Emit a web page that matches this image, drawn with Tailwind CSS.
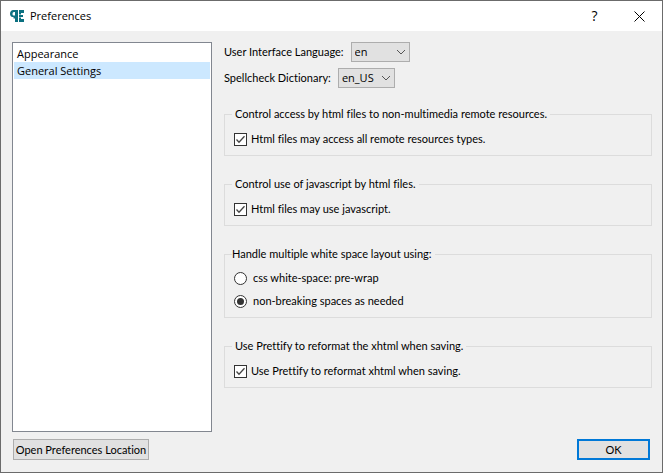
<!DOCTYPE html>
<html lang="en">
<head>
<meta charset="utf-8">
<title>Preferences</title>
<script src="https://cdn.jsdelivr.net/npm/@tailwindcss/browser@4"></script>
</head>
<body class="flex min-h-screen flex-col border border-[#6b6b6b] bg-[#f0f0f0] font-['Lato','Noto_Sans',sans-serif] text-[11px] leading-4 text-black [font-variant-ligatures:none]">
<header class="flex h-[30px] items-center bg-white pl-[9px] font-['Open_Sans',sans-serif]">
  <svg class="mr-1.5 h-3.5 w-3.5" viewBox="0 0 14 14" fill="#0b7080" aria-hidden="true"><path fill-rule="evenodd" d="M8 1v12H5V9.500H3.500V8H2.500C1 8 0 6.500 0 4.800S1 1 3.500 1zM5 3H4C3 3 2.500 3.800 2.500 5S3 6.500 4 6.500h1z"/><path d="M9 1h5v3h-3v1.500H9zM9 6h4v2H9zM9 8.500h2V10h3v3H9z"/></svg>
  <h1 class="flex-1">Preferences</h1>
  <button type="button" aria-label="Help" class="h-full w-[45px] text-sm">?</button>
  <button type="button" aria-label="Close" class="flex h-full w-[45px] items-center justify-center"><svg class="h-[11px] w-[11px]" viewBox="0 0 11 11" fill="none" stroke="#000"><path d="M.5.5l10 10M10.500.5l-10 10"/></svg></button>
</header>
<main class="flex flex-1 gap-3 pt-[11px] pr-2.5 pl-[11px]">
  <nav class="w-[200px] shrink-0 border border-[#828790] bg-white p-px pt-0.5 font-['Open_Sans',sans-serif] leading-[17px]">
    <a href="#appearance" class="block px-[3px]">Appearance</a>
    <a href="#general" aria-current="page" class="block bg-[#cce8ff] px-[3px]">General Settings</a>
  </nav>
  <form class="flex min-w-0 flex-1 flex-col">
    <div class="flex h-5 items-center gap-[7px]">
      <label for="lang">User Interface Language:</label>
      <span class="grid items-center">
        <select id="lang" class="col-start-1 row-start-1 h-5 w-[59px] appearance-none border border-[#adadad] bg-[#e1e1e1] pl-[3px] font-['Open_Sans',sans-serif] leading-4"><option>en</option></select>
        <svg class="pointer-events-none col-start-1 row-start-1 mr-1 h-2 w-2.5 justify-self-end" viewBox="0 0 10 8" fill="none" stroke="#555"><path d="M1 2l4 4 4-4"/></svg>
      </span>
    </div>
    <div class="mt-1.5 flex h-5 items-center gap-[7px]">
      <label for="dict">Spellcheck Dictionary:</label>
      <span class="grid items-center">
        <select id="dict" class="col-start-1 row-start-1 h-5 w-[57px] appearance-none border border-[#adadad] bg-[#e1e1e1] pl-[3px] font-['Open_Sans',sans-serif] leading-4"><option>en_US</option></select>
        <svg class="pointer-events-none col-start-1 row-start-1 mr-1 h-2 w-2.5 justify-self-end" viewBox="0 0 10 8" fill="none" stroke="#555"><path d="M1 2l4 4 4-4"/></svg>
      </span>
    </div>
    <div class="mt-[18px] flex flex-col gap-5">
      <fieldset class="border border-[#dcdcdc] px-[9px] pt-[9px] pb-2">
        <legend class="-ml-0.5 px-[3px]">Control access by html files to non-multimedia remote resources.</legend>
        <label class="flex items-center gap-1">
          <span class="grid"><input type="checkbox" checked class="peer col-start-1 row-start-1 h-[13px] w-[13px] appearance-none border border-[#333] bg-white"><svg class="pointer-events-none invisible col-start-1 row-start-1 h-[13px] w-[13px] peer-checked:visible" viewBox="0 0 13 13" fill="none" stroke="#444" stroke-width="1.300"><path d="M2.500 6.500l2.500 2.700 5.500-6"/></svg></span>
          Html files may access all remote resources types.</label>
      </fieldset>
      <fieldset class="border border-[#dcdcdc] px-[9px] pt-[9px] pb-2">
        <legend class="-ml-0.5 px-[3px]">Control use of javascript by html files.</legend>
        <label class="flex items-center gap-1">
          <span class="grid"><input type="checkbox" checked class="peer col-start-1 row-start-1 h-[13px] w-[13px] appearance-none border border-[#333] bg-white"><svg class="pointer-events-none invisible col-start-1 row-start-1 h-[13px] w-[13px] peer-checked:visible" viewBox="0 0 13 13" fill="none" stroke="#444" stroke-width="1.300"><path d="M2.500 6.500l2.500 2.700 5.500-6"/></svg></span>
          Html files may use javascript.</label>
      </fieldset>
      <fieldset class="border border-[#dcdcdc] px-[9px] pt-2 pb-2">
        <legend class="-ml-0.5 pr-[3px]">Handle multiple white space layout using:</legend>
        <label class="flex items-center gap-1.5">
          <span class="grid"><input type="radio" name="space" class="peer col-start-1 row-start-1 h-[13px] w-[13px] appearance-none rounded-full border border-[#333] bg-white"><svg class="pointer-events-none invisible col-start-1 row-start-1 h-[13px] w-[13px] peer-checked:visible" viewBox="0 0 13 13" fill="#333"><circle cx="6.500" cy="6.500" r="3.500"/></svg></span>
          css white-space: pre-wrap</label>
        <label class="mt-[7px] flex items-center gap-1.5">
          <span class="grid"><input type="radio" name="space" checked class="peer col-start-1 row-start-1 h-[13px] w-[13px] appearance-none rounded-full border border-[#333] bg-white"><svg class="pointer-events-none invisible col-start-1 row-start-1 h-[13px] w-[13px] peer-checked:visible" viewBox="0 0 13 13" fill="#333"><circle cx="6.500" cy="6.500" r="3.500"/></svg></span>
          non-breaking spaces as needed</label>
      </fieldset>
      <fieldset class="border border-[#dcdcdc] px-[9px] pt-[9px] pb-2">
        <legend class="-ml-0.5 px-[3px]">Use Prettify to reformat the xhtml when saving.</legend>
        <label class="flex items-center gap-1">
          <span class="grid"><input type="checkbox" checked class="peer col-start-1 row-start-1 h-[13px] w-[13px] appearance-none border border-[#333] bg-white"><svg class="pointer-events-none invisible col-start-1 row-start-1 h-[13px] w-[13px] peer-checked:visible" viewBox="0 0 13 13" fill="none" stroke="#444" stroke-width="1.300"><path d="M2.500 6.500l2.500 2.700 5.500-6"/></svg></span>
          Use Prettify to reformat xhtml when saving.</label>
      </fieldset>
    </div>
  </form>
</main>
<footer class="flex justify-between px-3 pt-[7px] pb-3">
  <button type="button" class="h-[21px] w-[136px] border border-[#adadad] bg-[#e1e1e1] whitespace-nowrap">Open Preferences Location</button>
  <button type="submit" class="h-[21px] w-[73px] border-2 border-[#0078d7] bg-[#e1e1e1]">OK</button>
</footer>
</body>
</html>
